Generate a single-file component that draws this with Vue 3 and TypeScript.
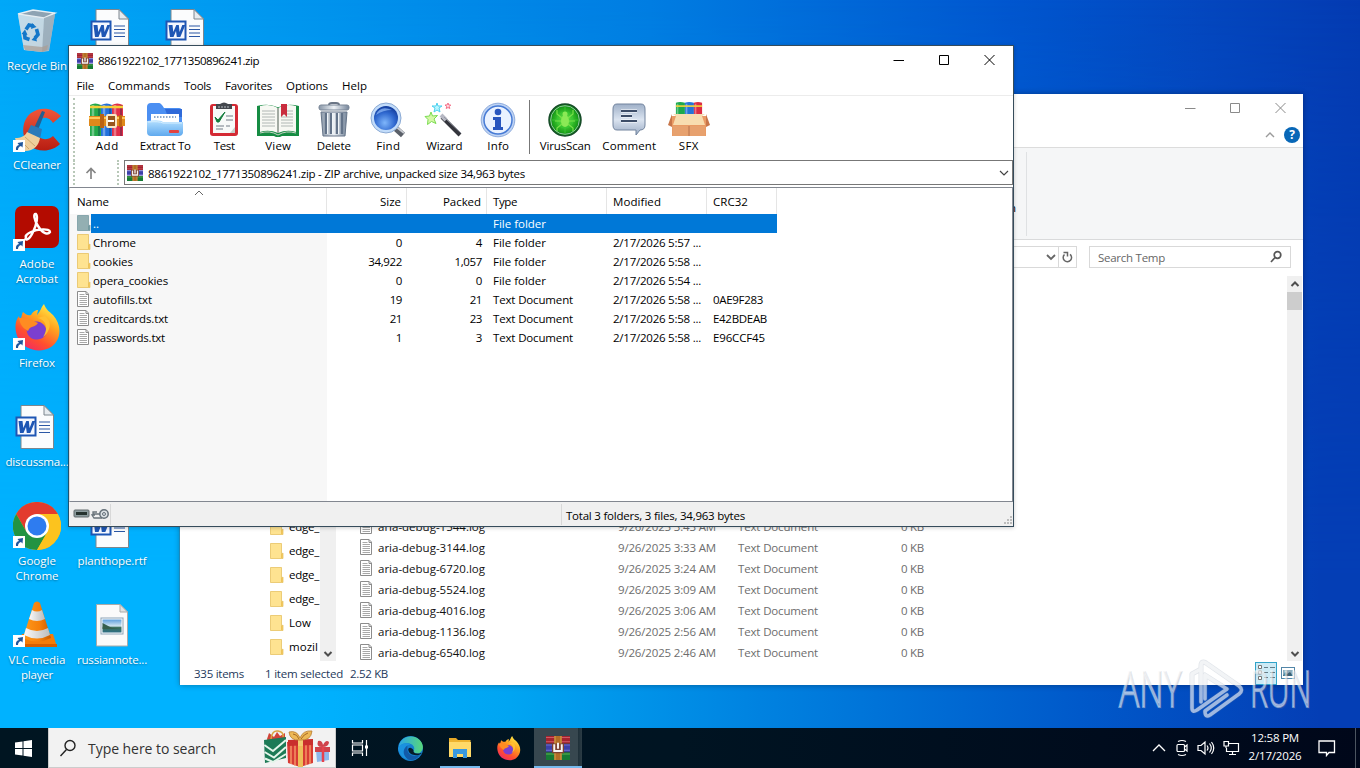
<script setup lang="ts">
interface Shortcut { icon: string; lines: [string, number][]; col: number; row: number; link?: boolean }
interface Tool { icon: string; label: string; text: number; width: number }
interface Entry { icon: string; name: string; nameW: number; size: string; packed: string; type: string; modified: string; crc: string }

// Spreads a label's letters so that it fills exactly the given advance width.
const vFit = {
  mounted(el: HTMLElement, binding: { value: number }) {
    const natural = el.getBoundingClientRect().width
    const count = (el.textContent ?? '').length
    if (count > 0 && binding.value > 0) {
      el.style.letterSpacing = ((binding.value - natural) / count).toFixed(3) + 'px'
    }
  },
}

const shortcuts: Shortcut[] = [
  { icon: 'bin', lines: [['Recycle Bin', 60]], col: 0, row: 0 },
  { icon: 'ccleaner', lines: [['CCleaner', 48]], col: 0, row: 1, link: true },
  { icon: 'acrobat', lines: [['Adobe', 35], ['Acrobat', 42]], col: 0, row: 2, link: true },
  { icon: 'firefox', lines: [['Firefox', 36]], col: 0, row: 3, link: true },
  { icon: 'word', lines: [['discussma...', 63]], col: 0, row: 4 },
  { icon: 'chrome', lines: [['Google', 38], ['Chrome', 43]], col: 0, row: 5, link: true },
  { icon: 'vlc', lines: [['VLC media', 57], ['player', 32]], col: 0, row: 6, link: true },
  { icon: 'word', lines: [], col: 1, row: 0 },
  { icon: 'word', lines: [], col: 2, row: 0 },
  { icon: 'word', lines: [['planthope.rtf', 69]], col: 1, row: 5 },
  { icon: 'picture', lines: [['russiannote...', 70]], col: 1, row: 6 },
]

const menus: [string, number][] = [['File', 17.5], ['Commands', 62], ['Tools', 27], ['Favorites', 47], ['Options', 42], ['Help', 25]]

const tools: Tool[] = [
  { icon: 'add', label: 'Add', text: 23, width: 42 },
  { icon: 'extract', label: 'Extract To', text: 51, width: 74 },
  { icon: 'test', label: 'Test', text: 21, width: 44 },
  { icon: 'view', label: 'View', text: 26, width: 64 },
  { icon: 'delete', label: 'Delete', text: 34, width: 47 },
  { icon: 'find', label: 'Find', text: 24, width: 62 },
  { icon: 'wizard', label: 'Wizard', text: 36, width: 50 },
  { icon: 'info', label: 'Info', text: 22, width: 58 },
]
const extraTools: Tool[] = [
  { icon: 'virus', label: 'VirusScan', text: 51, width: 64 },
  { icon: 'comment', label: 'Comment', text: 54, width: 64 },
  { icon: 'sfx', label: 'SFX', text: 20, width: 55 },
]

const entries: Entry[] = [
  { icon: 'folder', name: 'Chrome', nameW: 43, size: '0', packed: '4', type: 'File folder', modified: '2/17/2026 5:57 ...', crc: '' },
  { icon: 'folder', name: 'cookies', nameW: 40, size: '34,922', packed: '1,057', type: 'File folder', modified: '2/17/2026 5:58 ...', crc: '' },
  { icon: 'folder', name: 'opera_cookies', nameW: 75, size: '0', packed: '0', type: 'File folder', modified: '2/17/2026 5:54 ...', crc: '' },
  { icon: 'text', name: 'autofills.txt', nameW: 59, size: '19', packed: '21', type: 'Text Document', modified: '2/17/2026 5:58 ...', crc: '0AE9F283' },
  { icon: 'text', name: 'creditcards.txt', nameW: 75, size: '21', packed: '23', type: 'Text Document', modified: '2/17/2026 5:58 ...', crc: 'E42BDEAB' },
  { icon: 'text', name: 'passwords.txt', nameW: 72, size: '1', packed: '3', type: 'Text Document', modified: '2/17/2026 5:58 ...', crc: 'E96CCF45' },
]
const numW = (s: string) => s.length * 6.15 - (s.includes(',') ? 3.2 : 0)

const navFolders: [string, number][] = [['edge_', 30], ['edge_', 30], ['edge_', 30], ['edge_', 30], ['Low', 22], ['mozil', 29]]
const logs: [string, string][] = [
  ['1544', '3:43'], ['3144', '3:33'], ['6720', '3:24'], ['5524', '3:09'], ['4016', '3:06'], ['1136', '2:56'], ['6540', '2:46'],
]
</script>

<template>
  <div class="desktop">
    <svg class="defs" width="0" height="0">
      <defs>
        <linearGradient id="gFox" x1="0.8" y1="0" x2="0.2" y2="1"><stop offset="0" stop-color="#fff44f" /><stop offset=".35" stop-color="#ffa51f" /><stop offset=".7" stop-color="#ff4f2e" /><stop offset="1" stop-color="#f0246c" /></linearGradient>
        <linearGradient id="gCone" x1="0" y1="0" x2="1" y2="0"><stop offset="0" stop-color="#ff9a1c" /><stop offset=".6" stop-color="#f57f0a" /><stop offset="1" stop-color="#c85a00" /></linearGradient>
        <linearGradient id="gWhite" x1="0" y1="0" x2="1" y2="0"><stop offset="0" stop-color="#fafafa" /><stop offset="1" stop-color="#bcbcbc" /></linearGradient>
        <linearGradient id="gBin" x1="0" y1="0" x2="1" y2="1"><stop offset="0" stop-color="#d7e4ec" stop-opacity=".8" /><stop offset="1" stop-color="#a9bac6" /></linearGradient>
        <linearGradient id="gCC" x1="0" y1="0" x2="0" y2="1"><stop offset="0" stop-color="#f0563a" /><stop offset="1" stop-color="#b81d12" /></linearGradient>
        <linearGradient id="gMetal" x1="0" y1="0" x2="1" y2="0"><stop offset="0" stop-color="#8997a8" /><stop offset=".5" stop-color="#eef2f6" /><stop offset="1" stop-color="#75859a" /></linearGradient>
        <linearGradient id="gCom" x1="0" y1="0" x2="0" y2="1"><stop offset="0" stop-color="#9fb0c8" /><stop offset=".5" stop-color="#dbe4f0" /><stop offset="1" stop-color="#9aabc4" /></linearGradient>
        <linearGradient id="gPane" x1="0" y1="0" x2="0" y2="1"><stop offset="0" stop-color="#b5e0ff" /><stop offset="1" stop-color="#5fa9ee" /></linearGradient>
        <linearGradient id="gEdge" x1="0" y1="0" x2="1" y2="0"><stop offset="0" stop-color="#2aa6e6" /><stop offset="1" stop-color="#58d77a" /></linearGradient>
        <radialGradient id="gLens" cx=".45" cy=".7" r=".7"><stop offset="0" stop-color="#7fb6fb" /><stop offset=".6" stop-color="#2f68cf" /><stop offset="1" stop-color="#123c9c" /></radialGradient>
        <radialGradient id="gVirus"><stop offset="0" stop-color="#6df04e" /><stop offset=".75" stop-color="#1fa51c" /><stop offset="1" stop-color="#0b7a12" /></radialGradient>
        <linearGradient id="gSky" x1="0" y1="0" x2="0" y2="1"><stop offset="0" stop-color="#5d9fdc" /><stop offset=".5" stop-color="#cfe4f2" /><stop offset=".62" stop-color="#39705c" /><stop offset="1" stop-color="#2d6e86" /></linearGradient>
      </defs>

      <symbol id="bin" viewBox="0 0 48 48">
        <path d="M5 8 42 7 36 44 29 45 11 43Z" fill="url(#gBin)" />
        <path d="M5 7 20 3 42 6 31 11Z" fill="#8ea3b3" stroke="#e6eef3" stroke-width="1.4" />
        <path d="M31 11 42 7 36 43 29 45Z" fill="#9aaab6" opacity=".8" />
        <path d="M5 8 31 11 29 45 11 43Z" fill="#d2dfe8" opacity=".6" />
        <path d="M10 38 29 40 35 38 34 43 29 45 12 43Z" fill="#ab9d93" opacity=".7" />
        <path d="M13 22.500 16 18 20.500 19M23.500 22 25 27.500 22 31M16.500 32.500 12 31 11.500 26" fill="none" stroke="#1477c9" stroke-width="3.600" />
        <path d="M19 16 23.500 20 18 22ZM24 34.500 18.500 33 22.500 28.500ZM8.500 27 12 22.500 14.500 28Z" fill="#1477c9" />
      </symbol>
      <symbol id="ccleaner" viewBox="0 0 48 48">
        <path d="M48 10 C40 2 28 0 18 7 C8 15 8 31 16 39 C25 47 39 46 47 38 L40 30 C34 35 27 34 24 28 C21 22 24 14 30 12 C35 11 38 14 40 17Z" fill="url(#gCC)" />
        <path d="M29 5 32 6 25 24 21 22Z" fill="#235f91" />
        <path d="M18 19 29 23 27 33 14 27Z" fill="#2b7ab9" />
        <path d="M14 26 27 32 C26 39 21 45 12 45 C8 42 3 37 2 32 C8 32 12 30 14 26Z" fill="#efcf9d" />
        <path d="M7 34l9 9M12 31l10 9" stroke="#cfa66d" />
      </symbol>
      <symbol id="acrobat" viewBox="0 0 48 48">
        <rect x="2" y="1" width="44" height="42" rx="7" fill="#b30b00" />
        <path d="M13 32 C11 36 16 36 20 27 C24 19 25 11 23 9 C20 8 21 15 25 21 C30 29 35 30 37 27 C37 23 24 24 18 27 C14 29 12 31 13 32Z" fill="none" stroke="#fff" stroke-width="2.4" />
      </symbol>
      <symbol id="firefox" viewBox="0 0 48 48">
        <path d="M31 0 C33 6 37 8 40 11 C49 21 49 35 38 43 C27 50 11 46 5 34 C1 25 2 17 6 12 L7 16 C9 13 9 9 10 8 C13 10 14 12 18 11 C21 6 24 6 25 6 L24 11 C28 7 28 3 31 0Z" fill="url(#gFox)" />
        <path d="M14 21 C21 15 31 17 33 25 C35 34 25 38 18 34 C14 31 13 27 14 21Z" fill="#7b3fd0" />
        <path d="M6 14 C13 14 17 15 25 19 C22 24 17 21 15 27 C10 24 7 21 6 14Z" fill="#ff8c22" />
        <path d="M24 14 C33 15 36 25 30 33 C37 28 40 18 32 12Z" fill="#ffbf32" />
      </symbol>
      <symbol id="word" viewBox="0 0 48 48">
        <path d="M8 2.5H31L40.500 12V45.500H8Z" fill="#fbfcfd" stroke="#7d868e" />
        <path d="M31 2.500V12H40.500Z" fill="#e6ebef" stroke="#7d868e" />
        <path d="M26 19h11M26 22.500h11M26 26h11M26 29.500h11" stroke="#2b57a5" stroke-width="1.200" />
        <rect x="2.500" y="13.500" width="21" height="20" fill="#1e56b4" /><rect x="4.500" y="15.500" width="17" height="16" fill="#f5f8ff" />
        <path d="M5.500 18h4l.8 7 3-7h2.500l.8 7 2.700-7h3l-5 12h-3.500l-.8-6-2.500 6H7Z" fill="#1e56b4" />
      </symbol>
      <symbol id="picture" viewBox="0 0 48 48">
        <path d="M8.500 3.500H32L39.500 11V45H8.500Z" fill="#fafafa" stroke="#a9aaa8" />
        <path d="M32 3.500V11H39.500Z" fill="#e2e2e2" stroke="#a9aaa8" />
        <rect x="13" y="17" width="22" height="16" fill="#fff" stroke="#8ba3b7" /><rect x="14.500" y="18.500" width="19" height="13" fill="url(#gSky)" />
        <path d="M14.500 22 24 27 33 28 14.500 28Z" fill="#365f4d" />
      </symbol>
      <symbol id="chrome" viewBox="0 0 48 48">
        <circle cx="24" cy="24" r="24" fill="#fbbc05" />
        <path d="M24 24 44.800 12A24 24 0 0 0 3.200 12L13.600 30Z" fill="#e33b2e" />
        <path d="M3.200 12A24 24 0 0 0 24 48L34.400 30 24 24 13.600 30Z" fill="#229342" />
        <path d="M24 48A24 24 0 0 0 44.800 12H24L34.400 30Z" fill="#fcc31e" />
        <circle cx="24" cy="24" r="12" fill="#fff" /><circle cx="24" cy="24" r="9.500" fill="#2e7cf0" />
      </symbol>
      <symbol id="vlc" viewBox="0 0 48 48">
        <path d="M9 33 H40 L44 46H6Z" fill="#f47c08" /><path d="M6 43h38v3H6Z" fill="#d65f00" />
        <path d="M21 2 Q24 -1 27 2L38 37Q24 44 10 37Z" fill="url(#gCone)" />
        <path d="M19 9Q24 12 29 9L32 18Q24 22 16 18Z" fill="url(#gWhite)" />
        <path d="M13 27Q24 33 35 27L37 34Q24 41 11 34Z" fill="url(#gWhite)" />
      </symbol>
      <symbol id="link" viewBox="0 0 12 12">
        <rect width="12" height="12" fill="#fff" /><path d="M3 10C2.500 7 4 5.200 6 5L4.500 3 10 2 9.500 7.500 8 6C6 6.500 5 8 5 10Z" fill="#20569c" />
      </symbol>

      <symbol id="rar" viewBox="0 0 16 16">
        <rect y="0" width="16" height="5" fill="#a3232f" /><path d="M0 1h16M0 3.800h16" stroke="#d2606a" stroke-width=".6" />
        <rect y="5.500" width="16" height="5" fill="#3b41a9" /><path d="M0 6h16M0 9.500h16" stroke="#7a6fd4" stroke-width=".6" />
        <rect y="11" width="16" height="5" fill="#167a34" /><path d="M0 12h16" stroke="#54a94e" stroke-width=".8" />
        <rect x="5.500" width="5" height="16" fill="#b36d25" /><path d="M6 0V16M10 0V16" stroke="#d9a94f" stroke-width=".6" />
        <rect x="4" y="5" width="8" height="6.500" fill="#7b4231" />
        <path d="M5.500 5.500V10H10.500V5.500M8 4.500V8.500" fill="none" stroke="#f8f3f0" stroke-width="1.300" />
      </symbol>
      <symbol id="books" viewBox="0 0 34 22">
        <path d="M1 1q5-2 11 0V22H1Z" fill="#1ca94c" /><path d="M12 1q5-2 11 0V22H12Z" fill="#2374d8" /><path d="M23 1q5-2 10 0V22H23Z" fill="#dc2c43" />
        <path d="M3 2V22M14 2V22M25 2V22" stroke="#fff" stroke-width="2" opacity=".35" />
        <path d="M1 5h32" stroke="#f2d23d" stroke-width="2" />
      </symbol>
      <symbol id="add" viewBox="0 0 36 36">
        <path d="M1 3q5-3 11 0V34H1Z" fill="#23a94a" /><path d="M12 3q6-3 11 0V34H12Z" fill="#2371dc" /><path d="M23 3q5-3 11 0V34H23Z" fill="#e12e49" />
        <path d="M4 3V34M15 3V34M26 3V34" stroke="#fff" stroke-width="2.500" opacity=".35" />
        <path d="M10 3V34M21 3V34M32 3V34" stroke="#00204a" stroke-width="2" opacity=".3" />
        <path d="M1 5h33" stroke="#f5cf39" stroke-width="2.500" />
        <path d="M0 14h36v10H0Z" fill="#df891b" /><path d="M0 16h36" stroke="#ffc85b" stroke-width="2" /><path d="M11 12h4v14h-4ZM30 13h3v12h-3Z" fill="#bb6312" />
        <rect x="18" y="13" width="9" height="12" rx="1" fill="#98561c" stroke="#f8e7c4" stroke-width="2" /><path d="M19 19h6" stroke="#fff" stroke-width="2" />
      </symbol>
      <symbol id="extract" viewBox="0 0 38 36">
        <path d="M1 5Q1 1 5 1H13Q15 1 18 6H33Q36 6 36 10V30H1Z" fill="#4b8ff2" /><path d="M19 7H36V15H22Z" fill="#2f6ad9" />
        <path d="M5 12h28v9H5Z" fill="#fff" /><path d="M8 15h22" stroke="#8ea9ca" stroke-width="2" stroke-dasharray="1.500 1.500" />
        <path d="M1 19Q14 17 17 20H37V31Q36 34 33 34H5Q1 34 1 30Z" fill="url(#gPane)" /><path d="M2 20q11-1 15 1h19" stroke="#d7efff" fill="none" />
        <rect x="23" y="28" width="10" height="3" rx="1" fill="#e2423f" />
      </symbol>
      <symbol id="test" viewBox="0 0 32 36">
        <rect x="2" y="2" width="28" height="32" rx="3" fill="#d42a34" /><rect x="5" y="4" width="22" height="27" fill="#f8faf8" /><path d="M22 31h5v-6Z" fill="#c5cfca" />
        <path d="M8 5V2h4q4-3 8 0h4v5H8Z" fill="#43474d" /><path d="M10 5h12" stroke="#b7bec4" stroke-dasharray="2 1" />
        <path d="M7 15l3 3 7-8-6 10h-2Z" fill="#137d3c" stroke="#137d3c" /><path d="M18 14h7M18 18h7M8 24h8M18 24h4M8 27h7" stroke="#9fa7ac" stroke-width="1.300" />
      </symbol>
      <symbol id="view" viewBox="0 0 44 36">
        <path d="M1 4q11-3 20 1h2q10-4 20-1V34H26l-2 1h-4l-2-1H1Z" fill="#168c43" />
        <path d="M4 4q10-3 18 2V31Q13 27 4 30ZM40 4q-10-3-18 2V31q9-4 18-1Z" fill="#f7f8f3" /><path d="M4 31q10-3 18 2 8-5 18-2" fill="none" stroke="#c8d2c6" />
        <path d="M22 6V31" stroke="#a2aaa2" stroke-width="2" />
        <path d="M6 9h13M6 12h13M6 15h13M6 18h13M6 21h13M6 24h13M25 9h12M25 12h12M25 15h12M25 18h12M25 21h12M25 24h12" stroke="#b0b7b4" />
        <path d="M25 2h6v13l-3-3-3 3Z" fill="#c92d3e" />
      </symbol>
      <symbol id="delete" viewBox="0 0 34 36">
        <path d="M12 3q0-2 3-2h4q3 0 3 2" fill="none" stroke="#6a7585" stroke-width="2" /><rect x="2" y="3" width="30" height="5" rx="2" fill="url(#gMetal)" stroke="#788596" />
        <path d="M4 10H30L28 34H6Z" fill="url(#gMetal)" stroke="#667589" />
        <path d="M9 11V32M14 11V32M20 11V32M25 11V32" stroke="#637389" stroke-width="2.500" /><path d="M10.500 11V32M15.500 11V32M21.500 11V32" stroke="#eff4f8" />
      </symbol>
      <symbol id="find" viewBox="0 0 38 36">
        <path d="M24 24 34 33" stroke="#5b6069" stroke-width="6" /><path d="M25 23 35 31" stroke="#c7cbd1" stroke-width="2" />
        <circle cx="17" cy="16" r="15" fill="#c2dcfa" stroke="#8baad4" /><circle cx="17" cy="16" r="12" fill="url(#gLens)" /><path d="M7 13q4-10 16-5-9 0-16 5Z" fill="#9bc5ff" opacity=".65" />
      </symbol>
      <symbol id="wizard" viewBox="0 0 38 36">
        <path d="M17 15 35 33" stroke="#34353c" stroke-width="4" /><path d="M16 13 21 18" stroke="#b6b8c3" stroke-width="4" /><path d="M19 15 36 31" stroke="#9699a4" />
        <path d="M6 10l1.500 4 5-.5-3.500 3.500 2 4.500-4.500-2-4 3 .5-5-3-3 4.500-.5Z" fill="#d5f8a7" stroke="#7bdc52" />
        <path d="M12 1l1 3h4l-3 2 1 4-3-2-3 2 1-4-3-2h4Z" fill="#b7f6ff" stroke="#4dd0ee" /><path d="M23 1l.8 2h2l-1.500 1.500.5 2-1.800-1-1.800 1 .5-2L20 3h2Z" fill="#ffd9e0" stroke="#f46f87" />
      </symbol>
      <symbol id="info" viewBox="0 0 36 36">
        <circle cx="18" cy="18" r="16.800" fill="#bed3f4" stroke="#8facdc" /><circle cx="18" cy="18" r="14" fill="#eaf2ff" stroke="#477bd5" stroke-width="1.500" />
        <circle cx="18" cy="10" r="3.300" fill="#2855be" /><path d="M13 15h8v10h2v3H13v-3h2v-7h-2Z" fill="#2855be" />
      </symbol>
      <symbol id="virus" viewBox="0 0 36 36">
        <circle cx="18" cy="18" r="16" fill="url(#gVirus)" stroke="#164b28" stroke-width="1.500" /><circle cx="18" cy="18" r="14.300" fill="none" stroke="#90c4a0" />
        <circle cx="18" cy="18" r="8" fill="none" stroke="#38cb31" /><path d="M18 4V32M4 18H32" stroke="#40c739" opacity=".8" />
        <ellipse cx="18" cy="19" rx="4" ry="6" fill="#8be956" /><circle cx="18" cy="12" r="2.500" fill="#8be956" /><path d="M15 16l-5-4V8M21 16l5-4V8M14 19H8M22 19h6M15 22l-5 4v3M21 22l5 4v3" fill="none" stroke="#7ae24a" stroke-width="1.200" />
      </symbol>
      <symbol id="comment" viewBox="0 0 36 36">
        <path d="M6 2H30Q34 2 34 7V23Q34 28 29 28L25 33V28H6Q2 28 2 23V7Q2 2 6 2Z" fill="url(#gCom)" stroke="#72849e" />
        <path d="M10 9h16M10 14h11M10 19h16" stroke="#fff" stroke-width="3" /><path d="M10 9h16M10 14h11M10 19h16" stroke="#3d4d68" stroke-width="1.800" />
      </symbol>
      <symbol id="sfx" viewBox="0 0 44 36">
        <use href="#books" x="5" y="0" width="34" height="18" /><path d="M5 14 H39V34H5Z" fill="#e99b65" />
        <path d="M5 12l-4 11 4 2V14ZM39 12l4 11-4 2V14Z" fill="#c8764a" /><path d="M6 24H38V34H6Z" fill="#e7a16e" /><path d="M22 24V34" stroke="#b7704a" /><path d="M6 12H38L35 14 38 23H6L9 14Z" fill="#f8ddb0" />
      </symbol>
      <symbol id="folder" viewBox="0 0 14 16">
        <path d="M.5.500H11.500V11L13 10V15.500H.5Z" fill="#fddc80" stroke="#e4bd57" stroke-width=".7" /><path d="M1 1H11V15H1Z" fill="#fee391" /><path d="M11 11h1.800v4h-1.800Z" fill="#eec35a" />
      </symbol>
      <symbol id="text" viewBox="0 0 14 16">
        <path d="M.5.500H9L11.500 3V15.500H.5Z" fill="#fff" stroke="#8c8c8c" /><path d="M9 .5V3.500H11.500" fill="none" stroke="#8c8c8c" />
        <path d="M2.500 3.500H7.500M2.500 5.500H10M2.500 7.500H10M2.500 9.500H10M2.500 11.500H10M2.500 13.500H10" stroke="#a8a8a8" />
      </symbol>
      <symbol id="edge" viewBox="0 0 24 24">
        <circle cx="12" cy="12" r="12" fill="#147fce" />
        <path d="M1 9C3 1 13-2 20 3 25 7 25 14 21 16 18 18 14 16 15 14 17 11 14 7 9 7 5 7 2 8 1 12Z" fill="url(#gEdge)" />
        <path d="M9 9C5 11 5 18 10 22 5 22 1 18 0 12 2 7 9 6 12 8Z" fill="#1b92df" /><path d="M9 11C8 18 15 21 21 18 18 23 12 25 8 21 4 17 5 12 9 9Z" fill="#125aa8" /><path d="M15 14C14 16 17 18 23 16 20 20 11 19 10 14 9 11 13 10 15 14Z" fill="#071b29" />
      </symbol>
      <symbol id="files" viewBox="0 0 24 22">
        <path d="M1 1H8L10 3H22V20H1Z" fill="#e6a827" /><path d="M1 5H23V20H1Z" fill="#ffd968" /><path d="M5 12H19V21H15V17H9V21H5Z" fill="#3898df" /><path d="M1 4h22" stroke="#f5bd37" />
      </symbol>
      <symbol id="gifts" viewBox="0 0 68 38">
        <path d="M4 10l2-6 5 4 3-5 3 4 5-3v6L5 14Z" fill="#d14439" /><path d="M8 10Q9 1 15 2T20 8" stroke="#d9a33f" fill="none" stroke-width="1.500" />
        <path d="M1 11 23 8 23 29 2 34Z" fill="#1d7a56" /><path d="M1.300 16 10 22 23 11M1.600 23 11 28.500 23 18M2 29.500 10 33 23 25" stroke="#e4f5ea" stroke-width="2" fill="none" />
        <path d="M24 13 50 11 50 34 37 38 25 34Z" fill="#d83b34" /><path d="M28 14V35M32 14V37M43 13V36M47 12V35" stroke="#f7a36b" stroke-width="1.300" /><path d="M35 13h5V38h-5Z" fill="#edbd58" />
        <path d="M25 11 50 10V16L25 17Z" fill="#c92f2d" /><path d="M35 11h5v6h-5Z" fill="#f3ca70" />
        <path d="M37 11Q27 12 26 3 34 1 37 9 40 1 49 2 48 12 37 11Z" fill="#edb956" stroke="#b87b2d" stroke-width=".8" /><path d="M30 5q4 0 6 5M45 4q-4 1-7 6" stroke="#a86925" fill="none" />
        <path d="M53 21H66V31L54 33Z" fill="#8db8ec" /><path d="M52 18 67 18 67 23H52Z" fill="#d0434b" /><path d="M59 18Q53 18 55 12 59 11 60 16 63 10 66 13 66 18 59 18Z" fill="#d0434b" /><path d="M60 18V33" stroke="#e7424d" stroke-width="2.500" />
      </symbol>
    </svg>

    <div v-for="(s, i) in shortcuts" :key="i" class="shortcut" :style="{ left: s.col * 75 - 1 + 'px', top: s.row * 99 + 7 + 'px' }">
      <div class="pic">
        <svg width="48" height="48"><use :href="'#' + s.icon" /></svg>
        <svg v-if="s.link" class="badge" width="12" height="12"><use href="#link" /></svg>
      </div>
      <div v-for="l in s.lines" :key="l[0]" class="line"><span v-fit="l[1]">{{ l[0] }}</span></div>
    </div>

    <section class="explorer">
      <header class="ex-title">
        <svg width="120" height="28" fill="none" stroke="#8a8a8a"><path d="M5 14.500h10.500M50.500 9.500h9v9h-9ZM95.500 9l10 10M105.500 9l-10 10" /></svg>
      </header>
      <div class="ex-tabs">
        <svg width="10" height="8" fill="none" stroke="#9b9b9b" stroke-width="1.400"><path d="M1 6l4-4 4 4" /></svg>
        <span class="help">?</span>
      </div>
      <div class="ribbon"><span class="cut">n</span><i></i></div>
      <div class="address">
        <div class="path">
          <svg width="12" height="8" fill="none" stroke="#666" stroke-width="1.800"><path d="M2 2l4 4 4-4" /></svg>
          <svg class="reload" width="17" height="20" fill="none" stroke="#666" stroke-width="1.500"><path d="M5.500 7.500A4.200 4.200 0 1 0 11 7.300M4.500 5.500H8.500V9.500" /></svg>
        </div>
        <div class="search"><span v-fit="67">Search Temp</span>
          <svg width="14" height="14" fill="none" stroke="#565656" stroke-width="1.700"><circle cx="8.500" cy="5" r="3.300" /><path d="M6 7.500 2 12" /></svg>
        </div>
      </div>
      <div class="ex-body">
        <div class="nav">
          <div v-for="(f, i) in navFolders" :key="i" class="nav-row"><svg width="14" height="16"><use href="#folder" /></svg><span v-fit="f[1]">{{ f[0] }}</span></div>
        </div>
        <div class="nav-scroll"><svg width="10" height="8" fill="none" stroke="#4e4e4e" stroke-width="2"><path d="M1.500 2l3.500 3.500L8.500 2" /></svg></div>
        <div class="logs">
          <div v-for="l in logs" :key="l[0]" class="log">
            <svg width="14" height="16"><use href="#text" /></svg>
            <span class="lname"><span v-fit="107">aria-debug-{{ l[0] }}.log</span></span>
            <span class="ldate"><span v-fit="98">9/26/2025 {{ l[1] }} AM</span></span>
            <span class="ltype"><span v-fit="80">Text Document</span></span>
            <span class="lsize"><span v-fit="23">0 KB</span></span>
          </div>
        </div>
        <div class="vscroll">
          <svg width="10" height="8" fill="none" stroke="#4e4e4e" stroke-width="2"><path d="M1.500 6L5 2.500 8.500 6" /></svg>
          <b></b>
          <svg class="down" width="10" height="8" fill="none" stroke="#4e4e4e" stroke-width="2"><path d="M1.500 2L5 5.500 8.500 2" /></svg>
        </div>
      </div>
      <footer class="ex-status">
        <span v-fit="50">335 items</span><span v-fit="78" class="sel">1 item selected</span><span v-fit="38" class="kb">2.52 KB</span>
        <div class="modes">
          <span class="mode on"><svg width="18" height="16" fill="none"><path d="M1.500.500h3v3h-3ZM1.500 6h3v3h-3ZM1.500 11.500h3v3h-3Z" fill="#fff" stroke="#777" /><path d="M7 2.500h4M13 2.500h5M7 7.500h4M13 7.500h5M7 12.500h4M13 12.500h5" stroke="#637d89" /></svg></span>
          <svg class="big" width="14" height="12"><rect x=".5" y=".5" width="13" height="11" fill="#fff" stroke="#5286a8" /><rect x="2" y="3" width="10" height="6" fill="#8fabba" /><path d="M2 9h10L9 5 6 7 4 5Z" fill="#3b6174" /></svg>
        </div>
      </footer>
    </section>

    <section class="rarwin">
      <header class="title">
        <svg width="16" height="16"><use href="#rar" /></svg>
        <span v-fit="161">8861922102_1771350896241.zip</span>
        <svg class="ctl" width="120" height="28" fill="none" stroke="#000"><path d="M4.500 13.500h10.500M50.500 8.500h9v9h-9ZM95.500 8l10 10M105.500 8l-10 10" /></svg>
      </header>
      <nav class="menu"><span v-for="m in menus" :key="m[0]" v-fit="m[1]">{{ m[0] }}</span></nav>
      <div class="toolbar">
        <i class="grip"></i>
        <div v-for="t in tools" :key="t.icon" class="tool" :style="{ width: t.width + 'px' }"><svg width="44" height="36"><use :href="'#' + t.icon" /></svg><span v-fit="t.text">{{ t.label }}</span></div>
        <i class="sep"></i>
        <div v-for="t in extraTools" :key="t.icon" class="tool" :style="{ width: t.width + 'px' }"><svg width="44" height="36"><use :href="'#' + t.icon" /></svg><span v-fit="t.text">{{ t.label }}</span></div>
      </div>
      <div class="location">
        <i class="grip"></i>
        <svg class="up" width="12" height="12" fill="none" stroke="#858585" stroke-width="1.700"><path d="M6 12V1.500M1.500 6 6 1.500 10.500 6" /></svg>
        <i class="grip second"></i>
        <div class="combo">
          <svg width="16" height="16"><use href="#rar" /></svg>
          <span v-fit="377">8861922102_1771350896241.zip - ZIP archive, unpacked size 34,963 bytes</span>
          <svg class="chev" width="10" height="8" fill="none" stroke="#444" stroke-width="1.200"><path d="M1 2l4 4 4-4" /></svg>
        </div>
      </div>
      <div class="list">
        <div class="row head">
          <span class="c name"><span v-fit="32">Name</span><svg class="sort" width="10" height="6" fill="none" stroke="#666"><path d="M1 5l4-4 4 4" /></svg></span>
          <span class="c num"><span v-fit="21">Size</span></span>
          <span class="c num"><span v-fit="38">Packed</span></span>
          <span class="c type"><span v-fit="24">Type</span></span>
          <span class="c mod"><span v-fit="48">Modified</span></span>
          <span class="c crc"><span v-fit="35">CRC32</span></span>
        </div>
        <div class="row selected">
          <span class="c name"><svg class="tinted" width="14" height="16"><use href="#folder" /></svg><span v-fit="6">..</span></span>
          <span class="c num"></span><span class="c num"></span>
          <span class="c type"><span v-fit="53">File folder</span></span>
          <span class="c mod"></span><span class="c crc"></span>
        </div>
        <div v-for="e in entries" :key="e.name" class="row">
          <span class="c name"><svg width="14" height="16"><use :href="'#' + e.icon" /></svg><span v-fit="e.nameW">{{ e.name }}</span></span>
          <span class="c num"><span v-fit="numW(e.size)">{{ e.size }}</span></span>
          <span class="c num"><span v-fit="numW(e.packed)">{{ e.packed }}</span></span>
          <span class="c type"><span v-fit="e.icon === 'folder' ? 53 : 80">{{ e.type }}</span></span>
          <span class="c mod"><span v-fit="88">{{ e.modified }}</span></span>
          <span class="c crc"><span v-if="e.crc" v-fit="e.crc === '0AE9F283' ? 50 : e.crc === 'E42BDEAB' ? 54 : 52">{{ e.crc }}</span></span>
        </div>
      </div>
      <footer class="status">
        <svg width="38" height="16" fill="none"><rect x="1" y="4" width="15" height="7" rx="1" fill="#8c9c9e" stroke="#626b6d" /><path d="M3 7.500h11" stroke="#26332f" stroke-width="3" /><path d="M24 6h-4v2h7M22 9h-3l2 3h8" stroke="#69737a" stroke-width="1.300" /><circle cx="31" cy="8" r="4.200" fill="#dce1e5" stroke="#65717a" stroke-width="1.500" /><circle cx="31" cy="8" r="1.500" stroke="#65717a" /></svg>
        <i></i><div class="blank"></div><i></i>
        <span v-fit="179">Total 3 folders, 3 files, 34,963 bytes</span>
        <svg class="size-grip" width="9" height="9" fill="#bcbcbc"><path d="M6 0h2v2H6ZM3 3h2v2H3ZM6 3h2v2H6ZM0 6h2v2H0ZM3 6h2v2H3ZM6 6h2v2H6Z" /></svg>
      </footer>
    </section>

    <svg class="watermark" width="200" height="66" viewBox="0 0 200 66">
      <g class="shade"><text x="5" y="53" textLength="62" lengthAdjust="spacingAndGlyphs">ANY</text><text x="136" y="53" textLength="61" lengthAdjust="spacingAndGlyphs">RUN</text></g>
      <g class="ink"><text x="4" y="52" textLength="62" lengthAdjust="spacingAndGlyphs">ANY</text><text x="135" y="52" textLength="61" lengthAdjust="spacingAndGlyphs">RUN</text></g>
      <g fill="none" stroke-linejoin="round" stroke-linecap="round">
        <path d="M86 47V11Q86 5 91 8L124 31Q129 35 124 39L95 60Q90 63 90 56L112 40M86 14 77 19V53Q77 58 82 55L112 34 90 20V44" stroke="#7888a0" stroke-opacity=".22" stroke-width="5" />
        <path d="M86 47V11Q86 5 91 8L124 31Q129 35 124 39L95 60Q90 63 90 56L112 40M86 14 77 19V53Q77 58 82 55L112 34 90 20V44" stroke="#fff" stroke-opacity=".58" stroke-width="3.600" />
      </g>
    </svg>

    <div class="taskbar">
      <div class="start"><svg width="18" height="17" fill="#fff"><path d="M0 2.500 7.500 1.500V8H0ZM8.500 1.300 17 0V8H8.500ZM0 9H7.500V15.500L0 14.500ZM8.500 9H17V17L8.500 15.700Z" /></svg></div>
      <div class="searchbox">
        <svg width="18" height="18" fill="none" stroke="#222" stroke-width="1.400"><circle cx="11" cy="6.500" r="5" /><path d="M7.500 10.500 1.500 17" /></svg>
        <span v-fit="128">Type here to search</span>
        <svg class="gifts" width="68" height="38"><use href="#gifts" /></svg>
      </div>
      <div class="task"><svg width="18" height="16" fill="none" stroke="#fff" stroke-width="1.200"><path d="M1.500 0V3H11.500V0M1.500 16V13H11.500V16M1.500 5H11.500V11H1.500ZM15.500 0V16" /><path d="M14 7h3" stroke-width="3" /></svg></div>
      <div class="task edge"><svg width="25" height="25"><use href="#edge" /></svg></div>
      <div class="task open"><svg width="24" height="22"><use href="#files" /></svg></div>
      <div class="task fox"><svg width="25" height="25"><use href="#firefox" /></svg></div>
      <div class="task active"><svg width="24" height="24"><use href="#rar" /></svg></div>
      <div class="tray">
        <svg width="14" height="10" fill="none" stroke="#fff" stroke-width="1.300"><path d="M1 8l6-6 6 6" /></svg>
        <svg width="14" height="18" fill="none" stroke="#fff" stroke-width="1.200"><rect x="2" y="5.500" width="7.500" height="7" rx="1" /><path d="M9.500 8 12 6V12L9.500 10M3 2.500Q7 .5 11 2.500M3 15.500Q7 17.500 11 15.500" /></svg>
        <svg width="18" height="16" fill="none" stroke="#fff" stroke-width="1.200"><path d="M1 5.500H4L8 2V14L4 10.500H1ZM10 5.500Q12 8 10 10.500M12.500 3.500Q16 8 12.500 12.500M14.500 2Q19 8 14.500 14" /></svg>
        <svg width="17" height="16" fill="none" stroke="#fff" stroke-width="1.200"><path d="M5.500 3.500H15.500V11.500H3.500V8M9.500 11.500V14.500M6 14.500H13M1 1.500H5.500V6H1ZM3 6V8" /></svg>
        <div class="clock"><div><span v-fit="48">12:58 PM</span></div><div><span v-fit="53">2/17/2026</span></div></div>
        <svg class="note" width="18" height="18" fill="none" stroke="#fff" stroke-width="1.300"><path d="M1 2H16.500V13.500H11L8.500 16.500V13.500H1Z" /></svg>
        <i></i>
      </div>
    </div>
  </div>
</template>

<style>
html, body { margin: 0; overflow: hidden; }
</style>

<style scoped>
.desktop { position: relative; width: 1360px; height: 768px; overflow: hidden; font-family: "Open Sans", "Noto Sans", sans-serif; font-size: 11.5px; line-height: 15px; color: #000; background: linear-gradient(90deg, #00a8f8 0, #0099f0 240px, #007de2 650px, #0056cf 1010px, #0447bf 1200px, #043bb2 1360px); }
.desktop::before { content: ""; position: absolute; inset: 0; background: linear-gradient(90deg, #00b2ff 0, #00b2ff 300px, #00a5f2 510px, #0082e0 760px, #0059ca 1080px, #043eb5 1320px); -webkit-mask-image: linear-gradient(transparent, #000 75%); mask-image: linear-gradient(transparent, #000 75%); }
.defs { position: absolute; }
svg { display: block; flex: none; }
span { white-space: nowrap; }
.shortcut { position: absolute; width: 76px; display: flex; flex-direction: column; align-items: center; color: #fff; text-shadow: 0 1px 2px #0006; }
.pic { position: relative; height: 51px; }
.badge { position: absolute; left: 0; bottom: 5px; }
.line { height: 15px; }

.explorer { position: absolute; left: 180px; top: 94px; width: 1123px; height: 591px; background: #fff; box-shadow: -1px 0 #2188b8, 0 0 6px #0005; display: flex; flex-direction: column; }
.ex-title { height: 28px; display: flex; justify-content: flex-end; padding-right: 3px; }
.ex-tabs { display: flex; justify-content: flex-end; align-items: center; gap: 9px; padding-right: 3px; border-bottom: 1px solid #dcdcdc; box-sizing: border-box; height: 26px; }
.help { width: 16px; height: 16px; border-radius: 50%; background: #0867b7; color: #fff; text-align: center; line-height: 16px; font-weight: 700; font-size: 12px; }
.ribbon { height: 92px; box-sizing: border-box; background: #f5f6f7; border-bottom: 1px solid #d9dadb; display: flex; padding-left: 829px; align-items: center; }
.ribbon .cut { margin-top: 27px; width: 17px; }
.ribbon i { width: 1px; height: 84px; background: #dfe1e3; }
.address { height: 30px; padding: 6px 12px 0 0; display: flex; justify-content: flex-end; gap: 12px; }
.path { width: 300px; height: 20px; border: 1px solid #d9d9d9; display: flex; justify-content: flex-end; align-items: center; gap: 1px; }
.reload { border-left: 1px solid #d9d9d9; }
.search { width: 200px; height: 20px; border: 1px solid #d9d9d9; display: flex; align-items: center; justify-content: space-between; color: #666; }
.search span { margin-left: 8px; }
.search svg { margin-right: 7px; }
.ex-body { flex: 1; min-height: 0; display: flex; align-items: stretch; }
.nav { width: 140px; overflow: hidden; display: flex; flex-direction: column; justify-content: flex-end; padding-bottom: 3px; box-sizing: border-box; }
.nav-row { height: 24px; display: flex; align-items: center; gap: 5px; padding-left: 90px; }
.nav-row svg { margin-top: 2px; }
.nav-scroll { width: 16px; background: #f0f0f0; display: flex; align-items: flex-end; justify-content: center; padding-bottom: 3px; box-sizing: border-box; }
.logs { flex: 1; display: flex; flex-direction: column; justify-content: flex-end; position: relative; margin-bottom: -2px; }
.log { height: 21px; display: flex; align-items: center; padding-left: 24px; color: #6d6d6d; }
.log svg { margin-top: -2px; }
.lname { width: 240px; margin-left: 4px; color: #111; }
.ldate { width: 120px; }
.ltype { width: 120px; }
.lsize { width: 66px; text-align: right; }
.vscroll { width: 15px; margin-right: 1px; background: #f0f0f0; display: flex; flex-direction: column; align-items: center; padding: 4px 0 3px; box-sizing: border-box; }
.vscroll b { width: 15px; height: 18px; background: #cdcdcd; margin-top: 4px; }
.vscroll .down { margin-top: auto; }
.ex-status { height: 24px; display: flex; align-items: center; padding-left: 14px; color: #1e395b; }
.sel { margin-left: 21px; }
.kb { margin-left: 7px; }
.modes { margin-left: auto; display: flex; align-items: center; gap: 4px; padding-right: 8px; }
.mode { width: 20px; height: 21px; border: 1px solid #31a3c9; background: #cceaf5; display: flex; align-items: center; justify-content: center; }

.rarwin { position: absolute; left: 69px; top: 45px; width: 944px; height: 480px; border: 1px solid #364c5b; border-left-color: #1b5372; margin-left: -1px; background: #fff; display: flex; flex-direction: column; box-shadow: 0 1px 4px #0003; }
.title { height: 30px; display: flex; align-items: center; padding: 0 4px 0 8px; gap: 5px; box-sizing: border-box; }
.title span { margin-top: -2px; }
.title .ctl { margin: 0 0 0 auto; }
.menu { height: 20px; display: flex; align-items: center; gap: 14px; padding-left: 7.5px; border-bottom: 1px solid #ececec; box-sizing: border-box; }
.toolbar { height: 63px; display: flex; padding-top: 2px; box-sizing: border-box; }
.grip { width: 0; border-left: 2px dotted #b8c8b8; margin-left: 4px; }
.toolbar .grip { margin-right: 11px; margin-bottom: -2px; }
.tool { display: flex; flex-direction: column; align-items: center; padding-top: 4px; padding-left: .5px; box-sizing: border-box; }
.toolbar .sep { width: 1px; height: 54px; margin: 2px 3px 0 2px; background: #777; }
.location { height: 28px; display: flex; align-items: center; box-sizing: border-box; padding-bottom: 1px; }
.location .grip { height: 25px; }
.up { margin-left: 10px; }
.location .second { margin-left: 20px; }
.combo { margin-left: 5px; height: 23px; flex: 1; display: flex; align-items: center; border: 1px solid #777; padding: 0 3px 0 2px; gap: 5px; }
.combo span { margin-top: 2px; }
.chev { margin-left: auto; }
.list { position: relative; flex: 1; border: 1px solid #828790; border-left-color: #dadada; box-sizing: border-box; background: linear-gradient(#f7f7f7, #f7f7f7) 0 26px / 257px 100% no-repeat; }
.row { display: grid; grid-template-columns: 257px 80px 80px 120px 100px 70px; width: 707px; height: 19px; align-items: stretch; }
.c { display: flex; align-items: center; box-sizing: border-box; min-width: 0; }
.name { padding-left: 7px; gap: 2px; }
.num { justify-content: flex-end; padding-right: 5px; }
.type, .mod, .crc { padding-left: 6px; }
.head { height: 26px; }
.head .c { border-right: 1px solid #e5e5e5; position: relative; padding-top: 0; }
.sort { position: absolute; left: 124px; top: 2px; }
.row:not(.head) .name svg { margin-top: -1px; }
.selected { color: #fff; background: linear-gradient(#0078d7, #0078d7) 21px 0 no-repeat; }
.tinted { filter: hue-rotate(135deg) saturate(.4) brightness(.75); }
.status { height: 24px; background: #f0f0f0; display: flex; align-items: center; padding-left: 4px; }
.status i { width: 1px; height: 21px; background: #d8d8d8; }
.status svg + i { margin-left: -1px; }
.blank { width: 450px; }
.status span { margin: 3px 0 0 4px; }
.status .size-grip { margin: auto 0 1px auto; }

.watermark { position: absolute; left: 1115px; top: 655px; overflow: visible; }
.watermark text { font-family: "Open Sans", sans-serif; font-weight: 300; font-size: 50px; }
.shade { fill: #6f7d92; fill-opacity: .22; stroke: #6f7d92; stroke-opacity: .15; stroke-width: 2; }
.ink { fill: #fff; fill-opacity: .4; stroke: #fff; stroke-opacity: .42; stroke-width: 1.8; }

.taskbar { position: absolute; left: 0; top: 728px; width: 1360px; height: 40px; display: flex; background: linear-gradient(90deg, #001521, #001422 50%, #00071a); color: #fff; }
.start { width: 48px; display: flex; align-items: center; justify-content: center; }
.searchbox { width: 288px; height: 40px; box-sizing: border-box; background: #f2f2f2; border: 1px solid #ccc; border-top: 0; color: #333; display: flex; align-items: center; padding-left: 10px; font-size: 14px; }
.searchbox span { margin: 2px 0 0 11px; }
.gifts { margin-left: auto; margin-right: 4px; }
.task { width: 48px; display: flex; align-items: center; justify-content: center; }
.task.edge { width: 54px; padding-right: 1px; box-sizing: border-box; }
.open { box-shadow: inset 0 -2px #76b9ed; width: 40px; margin: 0 2px; }
.fox { width: 52px; }
.active { width: 48px; background: linear-gradient(90deg, #37474f 44px, #1e2f38 44px, #2b3c45); box-shadow: inset 0 -2px #76b9ed; }
.tray { margin-left: auto; display: flex; align-items: center; gap: 8px; }
.tray svg:first-child { margin-right: 1px; }
.clock { width: 60px; text-align: center; line-height: 18px; margin: -2px 0 0 -3px; }
.note { margin-left: 5px; }
.tray i { width: 1px; height: 40px; background: #4c5560; margin: 0 4px 0 11px; }
</style>
